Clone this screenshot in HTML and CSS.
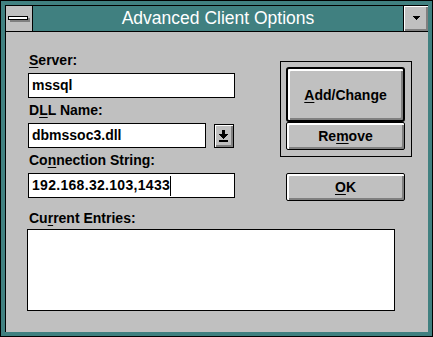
FILE: index.html
```html
<!DOCTYPE html>
<html>
<head>
<meta charset="utf-8">
<link rel="stylesheet" href="styles.css">
</head>
<body>
<div class="win">
  <div class="frame">
    <div class="inner">
      <div class="titlebar">
        <div class="sysbox"><span class="sysbar"></span></div>
        <div class="title">Advanced Client Options</div>
        <div class="tbtn"><svg width="7" height="4" viewBox="0 0 7 4" shape-rendering="crispEdges"><rect x="0" y="0" width="7" height="1" fill="#000"/><rect x="1" y="1" width="5" height="1" fill="#000"/><rect x="2" y="2" width="3" height="1" fill="#000"/><rect x="3" y="3" width="1" height="1" fill="#000"/></svg></div>
      </div>
      <div class="client">
        <div class="toprow">
          <div class="fields">
            <div class="label"><u>S</u>erver:</div>
            <div class="edit w-full">mssql</div>
            <div class="label">D<u>L</u>L Name:</div>
            <div class="combo">
              <div class="edit w-combo">dbmssoc3.dll</div>
              <div class="dropbtn"><svg width="9" height="12" viewBox="0 0 9 12" shape-rendering="crispEdges"><rect x="3" y="0" width="3" height="4" fill="#000"/><rect x="0" y="4" width="9" height="1" fill="#000"/><rect x="1" y="5" width="7" height="1" fill="#000"/><rect x="2" y="6" width="5" height="1" fill="#000"/><rect x="3" y="7" width="3" height="1" fill="#000"/><rect x="4" y="8" width="1" height="1" fill="#000"/><rect x="0" y="10" width="9" height="2" fill="#000"/></svg></div>
            </div>
            <div class="label">Co<u>n</u>nection String:</div>
            <div class="edit w-full"><span class="num">192.168.32.103,1433</span><span class="caret"></span></div>
          </div>
          <div class="buttons">
            <div class="group">
              <div class="btn default"><span><u>A</u>dd/Change</span></div>
              <div class="btn remove"><span>Re<u>m</u>ove</span></div>
            </div>
            <div class="btn ok"><span><u>O</u>K</span></div>
          </div>
        </div>
        <div class="label entries">Cu<u>r</u>rent Entries:</div>
        <div class="listbox"></div>
      </div>
    </div>
  </div>
</div>
</body>
</html>
```

FILE: styles.css
```css
html, body {
  margin: 0;
  padding: 0;
  background: #c0c0c0;
}
body {
  font-family: "Liberation Sans", Arial, sans-serif;
  width: 433px;
  height: 337px;
  overflow: hidden;
}
.win {
  box-sizing: border-box;
  width: 433px;
  height: 337px;
  border: 1px solid #000;
  background: #408080;
}
.frame {
  box-sizing: border-box;
  height: 100%;
  border: 4px solid #408080;
}
.inner {
  box-sizing: border-box;
  height: 100%;
  border-left: 1px solid #000;
  border-top: 1px solid #000;
  background: #c0c0c0;
  display: flex;
  flex-direction: column;
}
.titlebar {
  display: flex;
  height: 25px;
  border-bottom: 1px solid #000;
  flex: none;
}
.sysbox {
  width: 26px;
  height: 25px;
  background: #c0c0c0;
  border-right: 1px solid #000;
  flex: none;
}
.sysbar {
  display: block;
  box-sizing: border-box;
  width: 20px;
  height: 4px;
  margin: 10px 0 0 2px;
  background: #fff;
  border: 1px solid #000;
  box-shadow: 2px 2px 0 #808080;
}
.title {
  flex: 1;
  background: #408080;
  color: #fff;
  font-size: 17.5px;
  line-height: 25px;
  text-align: center;
  white-space: nowrap;
}
.tbtn {
  box-sizing: border-box;
  width: 25px;
  height: 25px;
  border-left: 1px solid #000;
  background: #c0c0c0;
  box-shadow: inset 1px 1px 0 #fff, inset -2px -2px 0 #808080;
  display: flex;
  align-items: center;
  justify-content: center;
  padding-bottom: 1px;
  flex: none;
}
.tbtn svg { display: block; }
.client {
  flex: 1;
  padding: 20px 0 0 22px;
  font-weight: bold;
  font-size: 14px;
  color: #000;
}
.toprow {
  display: flex;
  align-items: flex-start;
}
.fields {
  width: 207px;
  display: flex;
  flex-direction: column;
}
.label {
  line-height: 16px;
  height: 16px;
  padding-left: 1px;
  margin-bottom: 5px;
  white-space: nowrap;
}
.label u { text-underline-offset: 2px; }
.edit {
  box-sizing: border-box;
  height: 25px;
  border: 1px solid #000;
  background: #fff;
  padding-left: 3px;
  line-height: 23px;
  margin-bottom: 4px;
  white-space: nowrap;
  display: flex;
  align-items: center;
}
.w-full { width: 207px; }
.w-combo { width: 178px; margin-bottom: 0; }
.combo {
  display: flex;
  gap: 8px;
  margin-bottom: 4px;
  align-items: flex-start;
}
.dropbtn {
  box-sizing: border-box;
  width: 20px;
  height: 24px;
  margin-top: 1px;
  border: 1px solid #000;
  background: #c0c0c0;
  box-shadow: inset 1px 1px 0 #fff, inset -2px -2px 0 #808080;
  display: flex;
  align-items: center;
  justify-content: center;
  padding: 0 1px 1px 0;
}
.dropbtn svg { display: block; }
.num { letter-spacing: 0.3px; }
.caret {
  display: inline-block;
  width: 1px;
  height: 20px;
  background: #000;
  margin-left: 0px;
}
.buttons {
  margin-left: 45px;
  margin-top: 9px;
  display: flex;
  flex-direction: column;
}
.group {
  box-sizing: border-box;
  width: 132px;
  border: 1px solid #000;
  padding: 5px 6px 6px 5px;
  display: flex;
  flex-direction: column;
}
.btn {
  box-sizing: border-box;
  width: 119px;
  border: 1px solid #000;
  border-radius: 2px;
  background: #c0c0c0;
  box-shadow: inset 1px 1px 0 #fff, inset 2px 2px 0 #fff, inset -2px -2px 0 #808080;
  display: flex;
  align-items: center;
  justify-content: center;
  white-space: nowrap;
}
.btn.default {
  height: 55px;
  border: 2px solid #000;
  border-radius: 3px;
}
.btn.remove {
  height: 28px;
}
.btn.ok {
  height: 28px;
  margin-top: 16px;
  margin-left: 6px;
}
.btn u { text-underline-offset: 2px; }
.entries {
  margin-top: 8px;
  margin-bottom: 3px;
}
.listbox {
  box-sizing: border-box;
  width: 368px;
  height: 82px;
  margin-left: -1px;
  border: 1px solid #000;
  background: #fff;
}
```
